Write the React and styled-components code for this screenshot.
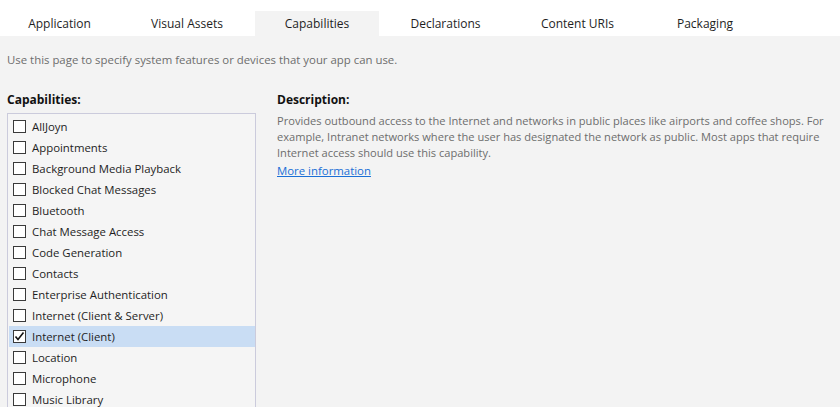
import React from 'react';
import styled, { createGlobalStyle } from 'styled-components';

const GlobalStyle = createGlobalStyle`
    html, body {
        margin: 0;
        padding: 0;
        background: #f3f3f3;
        font-family: "Open Sans", "Noto Sans", "DejaVu Sans", sans-serif;
        font-size: 11.4px;
        color: #1e1e1e;
        overflow: hidden;
    }
`;

const Page = styled.div`
    width: 840px;
    height: 407px;
    display: flex;
    flex-direction: column;
    background: #f3f3f3;
    overflow: hidden;
`;

const TabBar = styled.div`
    display: flex;
    flex-shrink: 0;
    align-items: flex-end;
    height: 36px;
    background: #ffffff;
`;

const Tab = styled.div`
    width: ${props => props.w}px;
    height: 25px;
    display: flex;
    align-items: center;
    justify-content: center;
    font-size: 12px;
    color: #1e1e1e;
    background: ${props => (props.active ? '#f3f3f3' : 'transparent')};
    box-sizing: border-box;
`;

const Body = styled.div`
    flex: 1;
    min-height: 0;
    display: flex;
    flex-direction: column;
    padding: 16px 2px 0 7px;
`;

const Intro = styled.p`
    margin: 0;
    color: #6d6d6d;
    line-height: 16px;
`;

const Columns = styled.div`
    flex: 1;
    min-height: 0;
    display: flex;
    gap: 21px;
    margin-top: 24px;
`;

const LeftColumn = styled.div`
    width: 249px;
    flex-shrink: 0;
    display: flex;
    flex-direction: column;
`;

const RightColumn = styled.div`
    flex: 1;
    display: flex;
    flex-direction: column;
`;

const Heading = styled.div`
    flex-shrink: 0;
    font-weight: 700;
    font-size: 12px;
    color: #111111;
    line-height: 16px;
    height: 21px;
`;

const ListBox = styled.div`
    flex: 1;
    overflow: hidden;
    border: 1px solid #cbcbdc;
    border-bottom: none;
    padding: 2px 0 0 1px;
    background: #f5f5f5;
`;

const Row = styled.div`
    display: flex;
    align-items: center;
    height: 21px;
    padding-left: 4px;
    gap: 6px;
    background: ${props => (props.selected ? '#c9ddf4' : 'transparent')};
`;

const Box = styled.div`
    width: 11px;
    height: 11px;
    border: 1px solid #3a3a3a;
    background: #ffffff;
    display: flex;
    align-items: center;
    justify-content: center;
`;

const Label = styled.span`
    color: #1e1e1e;
    white-space: nowrap;
`;

const Description = styled.p`
    margin: 0;
    color: #6d6d6d;
    font-size: 11.1px;
    line-height: 16px;
`;

const MoreLink = styled.a`
    margin-top: 2px;
    color: #1a6fd6;
    text-decoration: underline;
    line-height: 16px;
    cursor: pointer;
`;

const tabs = [
    { name: 'Application', w: 119 },
    { name: 'Visual Assets', w: 136 },
    { name: 'Capabilities', w: 124, active: true },
    { name: 'Declarations', w: 133 },
    { name: 'Content URIs', w: 131 },
    { name: 'Packaging', w: 124 },
];

const capabilities = [
    'AllJoyn',
    'Appointments',
    'Background Media Playback',
    'Blocked Chat Messages',
    'Bluetooth',
    'Chat Message Access',
    'Code Generation',
    'Contacts',
    'Enterprise Authentication',
    'Internet (Client & Server)',
    'Internet (Client)',
    'Location',
    'Microphone',
    'Music Library',
];

const Check = () => (
    <svg width="11" height="11" viewBox="0 0 11 11">
        <path d="M1.5 5.5 L4 8.5 L9.5 1.5" fill="none" stroke="#111" strokeWidth="1.6" />
    </svg>
);

export default function App() {
    return (
        <Page>
            <GlobalStyle />
            <TabBar>
                {tabs.map(t => (
                    <Tab key={t.name} w={t.w} active={t.active}>{t.name}</Tab>
                ))}
            </TabBar>
            <Body>
                <Intro>Use this page to specify system features or devices that your app can use.</Intro>
                <Columns>
                    <LeftColumn>
                        <Heading>Capabilities:</Heading>
                        <ListBox>
                            {capabilities.map(c => (
                                <Row key={c} selected={c === 'Internet (Client)'}>
                                    <Box>{c === 'Internet (Client)' && <Check />}</Box>
                                    <Label>{c}</Label>
                                </Row>
                            ))}
                        </ListBox>
                    </LeftColumn>
                    <RightColumn>
                        <Heading>Description:</Heading>
                        <Description>
                            Provides outbound access to the Internet and networks in public places like airports and coffee shops. For example, Intranet networks where the user has designated the network as public. Most apps that require Internet access should use this capability.
                        </Description>
                        <MoreLink>More information</MoreLink>
                    </RightColumn>
                </Columns>
            </Body>
        </Page>
    );
}
